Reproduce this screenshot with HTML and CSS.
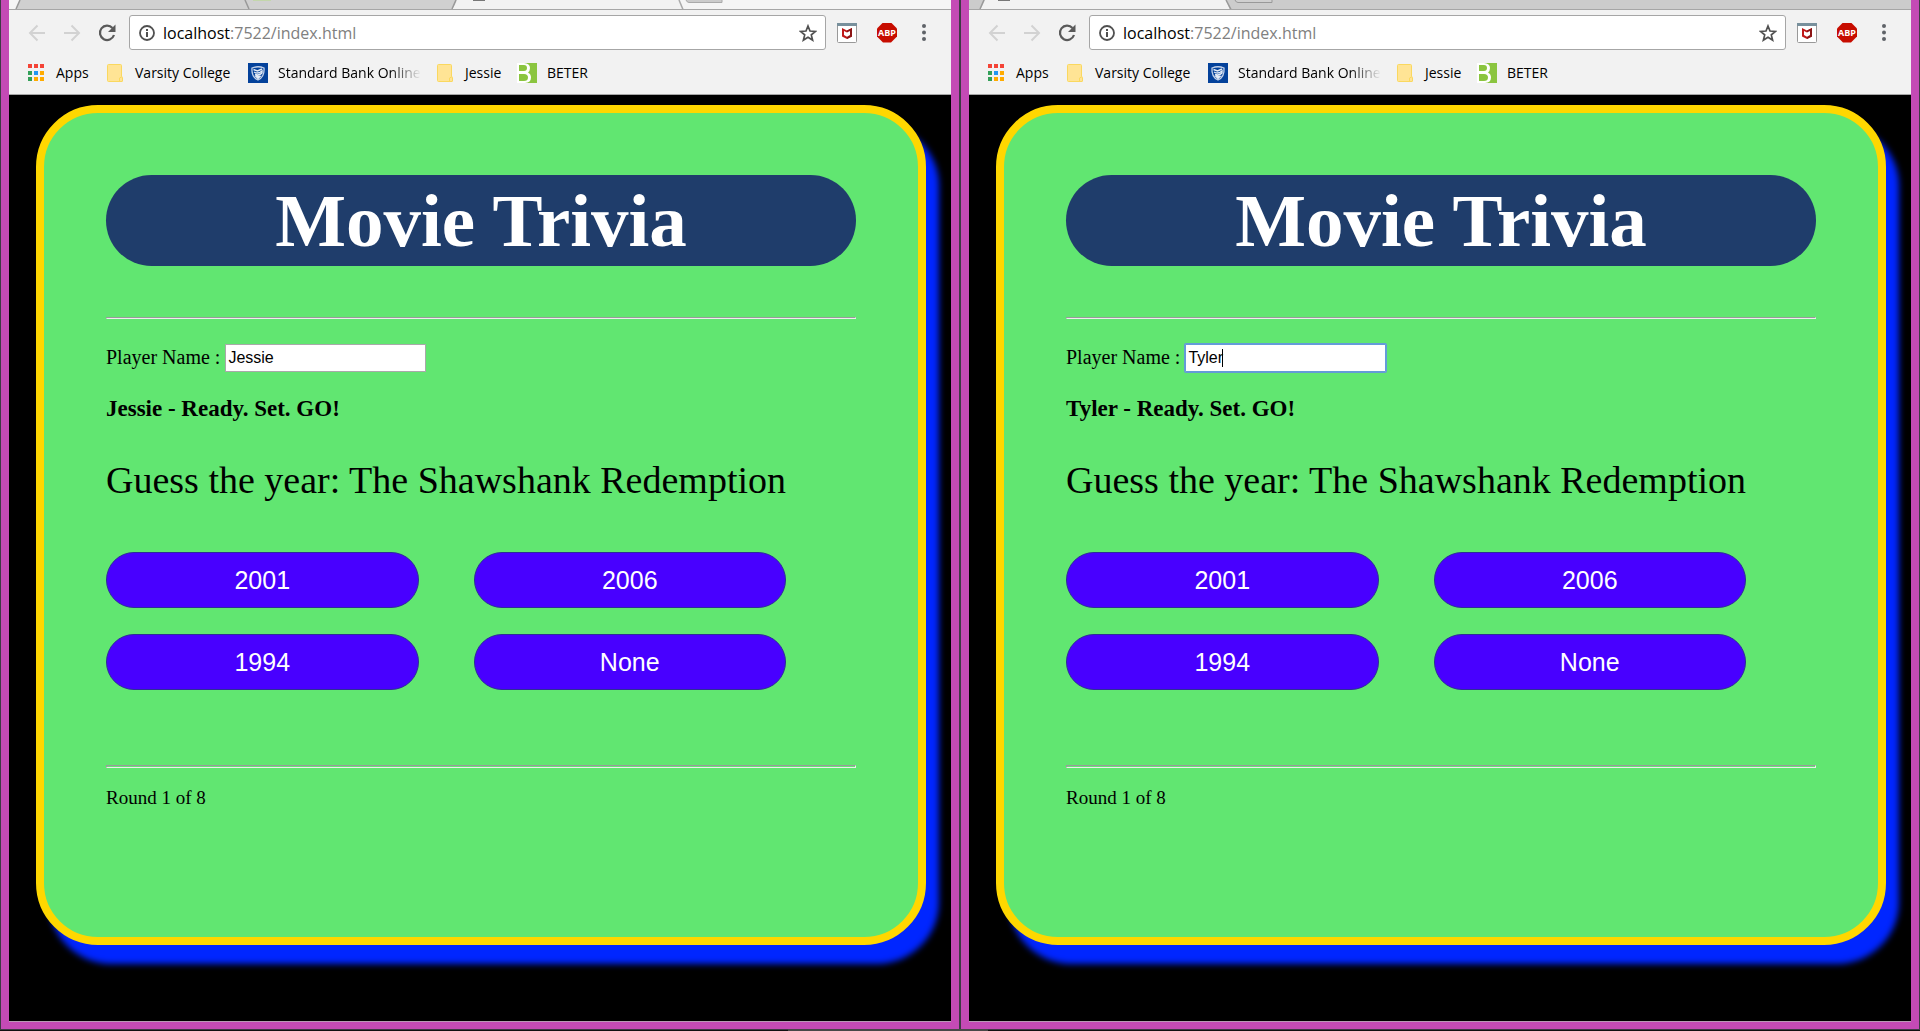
FILE: index.html
```html
<!DOCTYPE html>
<html lang="en">
<head>
<meta charset="utf-8">
<title>Movie Trivia</title>
<link rel="stylesheet" href="styles.css">
</head>
<body>
<svg class="defs" aria-hidden="true">
  <symbol id="back" viewBox="0 0 18 18"><path d="M17 9H2M9.500 1.500L2 9l7.500 7.500" fill="none" stroke="currentColor" stroke-width="2"/></symbol>
  <symbol id="forward" viewBox="0 0 18 18"><path d="M1 9h15M8.500 1.500L16 9l-7.500 7.500" fill="none" stroke="currentColor" stroke-width="2"/></symbol>
  <symbol id="reload" viewBox="0 0 18 18"><path d="M14.500 4A7.200 7.200 0 1 0 16 11" fill="none" stroke="currentColor" stroke-width="2.200"/><path d="M17.500 0.500V8H10z" fill="currentColor"/></symbol>
  <symbol id="info" viewBox="0 0 16 16"><circle cx="8" cy="8" r="7" fill="none" stroke="#505050" stroke-width="1.800"/><path d="M7 7h2v5H7zM7 4h2v2H7z" fill="#505050"/></symbol>
  <symbol id="star" viewBox="0 0 18 18"><path d="M9 2l2 5 5.400.400-4.100 3.500 1.300 5.200L9 13.300l-4.600 2.800 1.300-5.200L1.600 7.400 7 7z" fill="none" stroke="#505050" stroke-width="1.700"/></symbol>
  <symbol id="shield" viewBox="0 0 20 20"><rect x=".5" y=".5" width="19" height="19" rx="1" fill="#fff" stroke="#999"/><path d="M0 0h20v3H0z" fill="#78909c"/><path d="M5 5l5 2.500L15 5v8.500L10 16l-5-2.500z" fill="#c01818"/><path d="M10 7.500L15 5v8.500L10 16v-2l3-2V8l-3 1.500z" fill="#8c1515"/><path d="M7 8l3 1.600L13 8v4l-3 1.800L7 12z" fill="#fff"/></symbol>
  <symbol id="dots" viewBox="0 0 4 18"><g fill="#5f6368"><circle cx="2" cy="2" r="2"/><circle cx="2" cy="8.500" r="2"/><circle cx="2" cy="15" r="2"/></g></symbol>
  <symbol id="apps" viewBox="0 0 17 17"><path d="M0 0h4v4H0zM6 0h4v4H6zM12 0h4v4h-4z" fill="#f44336"/><path d="M0 7h4v4H0zM0 13h4v4H0z" fill="#34a059"/><path d="M6 7h4v4H6z" fill="#2196f3"/><path d="M12 7h4v4h-4zM6 13h4v4H6zM12 13h4v4h-4z" fill="#ffab00"/></symbol>
  <symbol id="folder" viewBox="0 0 16 18"><path d="M1.500.5h12q1 0 1 1V12l1 2v3q0 .5-.5.5H1.500q-1 0-1-1v-15q0-1 1-1z" fill="#ffe495" stroke="#fad85f"/><path d="M12.500 17v-3l2-1" fill="none" stroke="#fad85f"/></symbol>
  <symbol id="bank" viewBox="0 0 20 20"><path d="M0 0h20v20H0z" fill="#04429b"/><path d="M4 5q6-2.500 12 0c.5 6-1.500 10-6 12C5.500 15 3.500 11 4 5z" fill="#04429b" stroke="#c3d2ea" stroke-width="1.300"/><path d="M5.500 6.500l4 1.500L14 6M6 9q4 2.500 8-1v2q-3 3-7 1.500M8 13.500h4l-2 2z" fill="none" stroke="#e4ecf7" stroke-width="1.400"/></symbol>
  <symbol id="beter" viewBox="0 0 20 20"><path d="M0 0h20v20H0z" fill="#8bc53f"/><path d="M0 0h7q6 .5 6 5 0 3-2 4.500 3 1.500 3 5 0 5-6 5.500H0z" fill="#fff"/><path d="M2 2h5q3 0 3 3T7 8H2zM2 11h5q4 0 4 3.500T7 18H2z" fill="#8bc53f"/></symbol>
</svg>

<main class="desktop">
  <section class="window" aria-label="Jessie's browser">
    <div class="tabs tabs-light">
      <svg class="tab-art" viewBox="0 0 942 10" aria-hidden="true">
        <path d="M7 9L11 0H236L240 9z" fill="#d0d0d0"/><path d="M240 9L236 0H450L443 9z" fill="#d0d0d0"/>
        <path d="M7 9L11 0M236 0l4 9M443 9l4-9" fill="none" stroke="#999" stroke-width="1.500"/>
        <path d="M444 10l4-10h222l5 10z" fill="#f2f2f2"/><path d="M670 0l4 9.500" stroke="#aaa" stroke-width="1.500"/>
        <path d="M244 0h18" stroke="#c3d6ab" stroke-width="2"/><path d="M464 0h12" stroke="#777" stroke-width="2"/>
        <path d="M677 0q1 2.500 3 2.500h33V0" fill="#ccc" stroke="#aaa"/>
      </svg>
    </div>
    <header class="chrome">
      <div class="toolbar">
        <button class="tool off" aria-label="Back"><svg><use href="#back"/></svg></button>
        <button class="tool off" aria-label="Forward"><svg><use href="#forward"/></svg></button>
        <button class="tool" aria-label="Reload"><svg><use href="#reload"/></svg></button>
        <div class="address">
          <svg class="info"><use href="#info"/></svg>
          <span class="url">localhost<span class="path">:7522/index.html</span></span>
          <button class="tool" aria-label="Bookmark this page"><svg><use href="#star"/></svg></button>
        </div>
        <button class="ext" aria-label="McAfee"><svg><use href="#shield"/></svg></button>
        <button class="ext abp" aria-label="Adblock Plus">ABP</button>
        <button class="ext more" aria-label="Menu"><svg><use href="#dots"/></svg></button>
      </div>
      <nav class="bookmarks">
        <a href="#" class="mark mark-apps"><svg><use href="#apps"/></svg>Apps</a>
        <a href="#" class="mark mark-college"><svg><use href="#folder"/></svg>Varsity College</a>
        <a href="#" class="mark mark-bank"><svg><use href="#bank"/></svg><span class="fade">Standard Bank Online</span></a>
        <a href="#" class="mark mark-jessie"><svg><use href="#folder"/></svg>Jessie</a>
        <a href="#" class="mark mark-beter"><svg><use href="#beter"/></svg>BETER</a>
      </nav>
    </header>
    <div class="page">
      <article class="card">
        <h1 class="title">Movie Trivia</h1>
        <hr class="rule">
        <div class="player">
          <label for="player-1">Player Name :</label>
          <span class="field"><input id="player-1" class="name" type="text" value="Jessie"></span>
        </div>
        <h3 class="ready">Jessie - Ready. Set. GO!</h3>
        <p class="question">Guess the year: The Shawshank Redemption</p>
        <div class="answers">
          <button class="answer">2001</button>
          <button class="answer">2006</button>
          <button class="answer">1994</button>
          <button class="answer">None</button>
        </div>
        <hr class="rule rule-bottom">
        <p class="round">Round 1 of 8</p>
      </article>
    </div>
  </section>

  <section class="window" aria-label="Tyler's browser">
    <div class="tabs tabs-dark">
      <svg class="tab-art" viewBox="0 0 942 10" aria-hidden="true">
        <path d="M0 0h16l-5 9H0z" fill="#ccc"/>
        <path d="M11 10l5-10h241l4 10z" fill="#f2f2f2"/><path d="M11 9l4-9M257 0l5 9.500" stroke="#999" stroke-width="1.500"/>
        <path d="M29 0h12" stroke="#777" stroke-width="2"/>
        <path d="M266 0q1 2.500 3 2.500h34V0" fill="#d0d0d0" stroke="#999"/>
      </svg>
    </div>
    <header class="chrome">
      <div class="toolbar">
        <button class="tool off" aria-label="Back"><svg><use href="#back"/></svg></button>
        <button class="tool off" aria-label="Forward"><svg><use href="#forward"/></svg></button>
        <button class="tool" aria-label="Reload"><svg><use href="#reload"/></svg></button>
        <div class="address">
          <svg class="info"><use href="#info"/></svg>
          <span class="url">localhost<span class="path">:7522/index.html</span></span>
          <button class="tool" aria-label="Bookmark this page"><svg><use href="#star"/></svg></button>
        </div>
        <button class="ext" aria-label="McAfee"><svg><use href="#shield"/></svg></button>
        <button class="ext abp" aria-label="Adblock Plus">ABP</button>
        <button class="ext more" aria-label="Menu"><svg><use href="#dots"/></svg></button>
      </div>
      <nav class="bookmarks">
        <a href="#" class="mark mark-apps"><svg><use href="#apps"/></svg>Apps</a>
        <a href="#" class="mark mark-college"><svg><use href="#folder"/></svg>Varsity College</a>
        <a href="#" class="mark mark-bank"><svg><use href="#bank"/></svg><span class="fade">Standard Bank Online</span></a>
        <a href="#" class="mark mark-jessie"><svg><use href="#folder"/></svg>Jessie</a>
        <a href="#" class="mark mark-beter"><svg><use href="#beter"/></svg>BETER</a>
      </nav>
    </header>
    <div class="page">
      <article class="card">
        <h1 class="title">Movie Trivia</h1>
        <hr class="rule">
        <div class="player">
          <label for="player-2">Player Name :</label>
          <span class="field"><input id="player-2" class="name active" type="text" value="Tyler"><span class="caret"></span></span>
        </div>
        <h3 class="ready">Tyler - Ready. Set. GO!</h3>
        <p class="question">Guess the year: The Shawshank Redemption</p>
        <div class="answers">
          <button class="answer">2001</button>
          <button class="answer">2006</button>
          <button class="answer">1994</button>
          <button class="answer">None</button>
        </div>
        <hr class="rule rule-bottom">
        <p class="round">Round 1 of 8</p>
      </article>
    </div>
  </section>
</main>
<footer class="taskbar"><span class="task"></span></footer>
</body>
</html>
```
FILE: styles.css
```css
* { box-sizing: border-box; }

body {
  margin: 0;
  min-height: 100vh;
  display: flex;
  flex-direction: column;
  background: #111;
  font-family: "Liberation Serif", "Times New Roman", serif;
  color: #000;
}

h1, h3, p { margin: 0; }
button { border: 0; padding: 0; background: none; }
svg { display: block; }
.defs { position: absolute; width: 0; height: 0; }

.desktop { flex: 1; display: flex; }

.window {
  flex: 1 1 0;
  min-width: 0;
  display: flex;
  flex-direction: column;
  border: 8px solid #c44ab5;
  border-width: 0 8px 7px;
  margin: 0 1px;
  outline: 1px solid #3f3a45;
}

/* tab strip */
.tabs { height: 10px; overflow: hidden; flex: none; border-bottom: 1px solid #a6a6a6; }
.tabs-light { background: #f5f5f5; }
.tabs-dark { background: #ccc; }
.tab-art { width: 942px; height: 10px; position: relative; }

/* toolbar and bookmarks */
.chrome {
  flex: none;
  background: #f2f2f2;
  border-bottom: 1px solid #a6a6a6;
  font-family: "Open Sans", "Noto Sans", sans-serif;
  padding-top: 5px;
}
.toolbar { display: flex; align-items: center; height: 35px; padding: 0 25px 0 19px; }
.tool { width: 18px; height: 18px; color: #5a5a5a; flex: none; }
.tool svg { width: 18px; height: 18px; }
.toolbar > .tool { margin-right: 17px; }
.toolbar > .tool:nth-child(3) { margin-right: 13px; }
.toolbar > .off { color: #d2d2d2; }
.address {
  flex: 1;
  min-width: 0;
  height: 35px;
  display: flex;
  align-items: center;
  background: #fff;
  border: 1px solid #a6a6a6;
  border-radius: 3px;
  padding: 0 8px 0 9px;
  margin-right: 11px;
}
.info { width: 16px; height: 16px; flex: none; }
.url { flex: 1; font-size: 16px; line-height: 24px; margin-left: 8px; }
.path { color: #808080; }
.ext { width: 20px; height: 20px; margin-right: 20px; flex: none; }
.ext svg { width: 20px; height: 20px; }
.abp {
  background: #c70d00;
  clip-path: polygon(30% 0, 70% 0, 100% 30%, 100% 70%, 70% 100%, 30% 100%, 0 70%, 0 30%);
  color: #fff;
  font: bold 9px/20px "Open Sans", sans-serif;
  text-align: center;
}
.more { width: 4px; height: 18px; margin: 0 0 0 5px; }
.more svg { width: 4px; height: 18px; }

.bookmarks { display: flex; align-items: center; height: 44px; padding: 1px 0 0 19px; }
.mark { display: flex; align-items: center; font-size: 14px; line-height: 20px; color: #000; text-decoration: none; white-space: nowrap; flex: none; }
.mark svg { width: 20px; height: 20px; margin-right: 10px; flex: none; }
.mark-apps { width: 79px; }
.mark-apps svg { width: 17px; height: 17px; margin-right: 11px; }
.mark-college { width: 141px; }
.mark-jessie { width: 80px; }
.mark-college svg, .mark-jessie svg { width: 16px; height: 18px; margin-right: 12px; }
.mark-bank { width: 189px; }
.fade { width: 143px; overflow: hidden; -webkit-mask-image: linear-gradient(to right, #000 112px, transparent 143px); mask-image: linear-gradient(to right, #000 112px, transparent 143px); }

/* game page */
.page { flex: 1; background: #000; padding: 10px 25px 76px 27px; border-bottom: 1px solid #b89ab6; }
.card {
  background: #61e671;
  border: 8px solid #ffd700;
  border-radius: 62px;
  box-shadow: 13px 19px 6px #0026ff;
  padding: 62px 62px 128px;
}
.title {
  background: #1f3d6b;
  color: #fff;
  border-radius: 46px;
  font-size: 75px;
  line-height: 91px;
  text-align: center;
}
.rule {
  margin: 51px 0 25px;
  height: 2px;
  border: 1px solid #9a9a9a;
  border-color: #9a9a9a #eee #eee #9a9a9a;
}
.rule-bottom { margin: 75px 0 19px; height: 3px; }
.player { display: flex; align-items: flex-start; gap: 5px; font-size: 20px; line-height: 26px; }
.field { position: relative; display: flex; }
.name {
  width: 201px;
  height: 28px;
  border: 1px solid #a9a9a9;
  padding: 0 2px;
  background: #fff;
  color: #000;
  font: 16px "Liberation Sans", Arial, sans-serif;
}
.active { border-color: #649bd9; box-shadow: 0 0 0 1px #649bd9; border-radius: 1px; }
.caret { position: absolute; left: 37px; top: 5px; width: 1px; height: 18px; background: #000; }
.ready { font-size: 23px; line-height: 28px; margin-top: 23px; }
.question { font-size: 38px; line-height: 44px; margin-top: 35px; }
.answers { display: grid; grid-template-columns: 1fr 1fr; gap: 26px 55px; margin: 50px 70px 0 0; }
.answer {
  height: 56px;
  background: #4800ff;
  border: 1px solid #2c2f96;
  border-radius: 28px;
  color: #fff;
  font: 25px "Liberation Sans", Arial, sans-serif;
}
.round { font-size: 19px; line-height: 22px; }

.taskbar { flex: none; height: 2px; display: flex; justify-content: center; }
.task { width: 200px; margin-left: -144px; background: #484848; }
```
